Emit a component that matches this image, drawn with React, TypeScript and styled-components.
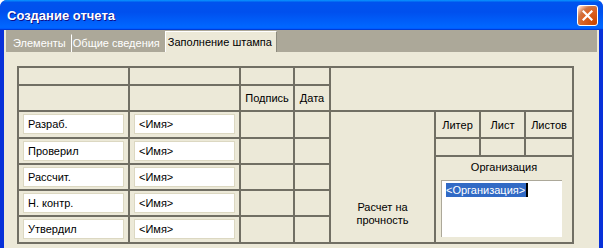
import React from 'react'
import styled, { createGlobalStyle } from 'styled-components'

const colors = {
  face: '#ece9d8',
  line: '#716f64',
  strip: '#aca899',
  frame: '#0831d9',
  select: '#316ac5',
}

const GlobalStyle = createGlobalStyle`
  html, body {
    margin: 0;
    padding: 0;
    background: #ffffff;
  }
  body {
    font-family: 'Liberation Sans', Arial, sans-serif;
    font-size: 11px;
    color: #000;
  }
`

const Window = styled.div`
  width: 603px;
  height: 248px;
  overflow: hidden;
  display: flex;
  flex-direction: column;
  background: ${colors.frame};
  border-radius: 7px 7px 0 0;
`
const TitleBar = styled.div`
  height: 30px;
  flex: none;
  display: flex;
  align-items: center;
  justify-content: space-between;
  padding: 0 5px 0 7px;
  background: linear-gradient(
    180deg,
    #0997ff,
    #0053ee 8%,
    #0050ee 40%,
    #0066ff 88%,
    #0066ff 93%,
    #005bff 95%,
    #003dd7 96%,
    #003dd7
  );
`
const Title = styled.span`
  font-family: 'Liberation Sans', Arial, sans-serif;
  font-weight: 700;
  font-size: 13px;
  color: #fff;
  text-shadow: 1px 1px #0f1089;
`
const CloseButton = styled.div`
  width: 21px;
  height: 21px;
  box-sizing: border-box;
  border: 1px solid #fff;
  border-radius: 3px;
  display: flex;
  align-items: center;
  justify-content: center;
  background: radial-gradient(
    circle at 90% 90%,
    #cc4600 0%,
    #dc6527 55%,
    #cd7546 70%,
    #ffccb2 90%,
    #fff 100%
  );
`
const Body = styled.div`
  flex: 1;
  margin: 0 4px;
  background: ${colors.face};
  display: flex;
  flex-direction: column;
`
const TabStrip = styled.div`
  height: 22px;
  flex: none;
  margin: 0 2px;
  background: ${colors.strip};
  display: flex;
  align-items: flex-end;
`
const Tab = styled.div<{ $active?: boolean; $divider?: boolean }>`
  height: ${(p) => (p.$active ? '21px' : '18px')};
  box-sizing: border-box;
  display: flex;
  align-items: center;
  padding: ${(p) =>
    p.$active ? '0 4px 1px 2px' : p.$divider ? '0 4px 2px 1px' : '0 4px 2px 6px'};
  color: ${(p) => (p.$active ? '#000' : '#fff')};
  background: ${(p) => (p.$active ? colors.face : 'transparent')};
  border-left: 1px solid ${(p) => (p.$active || p.$divider ? '#fff' : 'transparent')};
  border-top: 1px solid ${(p) => (p.$active ? '#fff' : 'transparent')};
  border-right: 1px solid ${(p) => (p.$active ? '#8d8b7e' : 'transparent')};
  white-space: nowrap;
`
const Panel = styled.div`
  padding: 14px 0 0 13px;
`
const Stamp = styled.div`
  display: grid;
  grid-template-columns: 109px 109px 52px 34px 103px 136px;
  grid-template-rows: 16px 24px 25px 24px 24px 24px 25px;
  gap: 2px;
  padding: 2px;
  width: max-content;
  background: ${colors.line};
`
const Cell = styled.div<{ $cols?: number; $rows?: number }>`
  background: ${colors.face};
  display: flex;
  align-items: center;
  justify-content: center;
  grid-column: span ${(p) => p.$cols ?? 1};
  grid-row: span ${(p) => p.$rows ?? 1};
`
const Field = styled.div`
  width: 101px;
  height: 20px;
  box-sizing: border-box;
  border: 1px solid #dcd8c2;
  background: #fff;
  padding: 0 4px;
  display: flex;
  align-items: center;
  margin-bottom: 1px;
`
const CalcCell = styled(Cell)`
  flex-direction: column;
  justify-content: flex-end;
  text-align: center;
  line-height: 13px;
  padding-bottom: 15px;
`
const SheetBlock = styled.div`
  grid-row: span 5;
  display: grid;
  grid-template-columns: 43px 43px 46px;
  grid-template-rows: 25px 16px 1fr;
  gap: 2px;
  background: ${colors.line};
`
const OrgCell = styled.div`
  grid-column: span 3;
  background: ${colors.face};
  display: flex;
  flex-direction: column;
  padding: 4px 0 0 5px;
`
const OrgLabel = styled.div`
  text-align: center;
  padding-right: 5px;
  line-height: 13px;
`
const ListBox = styled.div`
  margin-top: 6px;
  width: 121px;
  height: 57px;
  box-sizing: border-box;
  background: #fff;
  border-top: 1px solid ${colors.strip};
  border-left: 1px solid ${colors.strip};
  padding: 2px 0 0 4px;
  display: flex;
  align-items: flex-start;
`
const Selected = styled.span`
  background: ${colors.select};
  color: #fff;
  line-height: 14px;
  padding: 0 1px 0 0;
  border-right: 2px solid #000;
`

const people = ['Разраб.', 'Проверил', 'Рассчит.', 'Н. контр.', 'Утвердил']

const App = () => {
  return (
    <>
      <GlobalStyle />
      <Window>
        <TitleBar>
          <Title>Создание отчета</Title>
          <CloseButton>
            <svg width="11" height="11" viewBox="0 0 11 11">
              <path d="M1.5 1.5 L9.5 9.5 M9.5 1.5 L1.5 9.5" stroke="#fff" strokeWidth="2.2" strokeLinecap="square" />
            </svg>
          </CloseButton>
        </TitleBar>
        <Body>
          <TabStrip>
            <Tab>Элементы</Tab>
            <Tab $divider>Общие сведения</Tab>
            <Tab $active>Заполнение штампа</Tab>
          </TabStrip>
          <Panel>
            <Stamp>
              <Cell />
              <Cell />
              <Cell />
              <Cell />
              <Cell $cols={2} $rows={2} />
              <Cell />
              <Cell />
              <Cell>Подпись</Cell>
              <Cell>Дата</Cell>
              {people.map((name, i) => (
                <React.Fragment key={name}>
                  <Cell>
                    <Field>{name}</Field>
                  </Cell>
                  <Cell>
                    <Field>&lt;Имя&gt;</Field>
                  </Cell>
                  <Cell />
                  <Cell />
                  {i === 0 && (
                    <>
                      <CalcCell $rows={5}>
                        Расчет на
                        <br />
                        прочность
                      </CalcCell>
                      <SheetBlock>
                        <Cell>Литер</Cell>
                        <Cell>Лист</Cell>
                        <Cell>Листов</Cell>
                        <Cell />
                        <Cell />
                        <Cell />
                        <OrgCell>
                          <OrgLabel>Организация</OrgLabel>
                          <ListBox>
                            <Selected>&lt;Организация&gt;</Selected>
                          </ListBox>
                        </OrgCell>
                      </SheetBlock>
                    </>
                  )}
                </React.Fragment>
              ))}
            </Stamp>
          </Panel>
        </Body>
      </Window>
    </>
  )
}

export default App
